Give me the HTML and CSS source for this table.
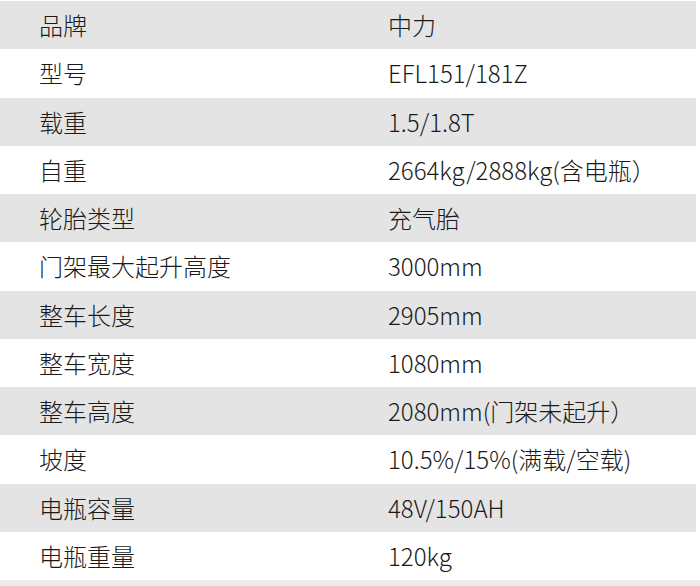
FILE: index.html
```html
<!DOCTYPE html>
<html lang="zh">
<head>
<meta charset="utf-8">
<link rel="stylesheet" href="styles.css">
</head>
<body>
<div class="spec">
  <div class="row alt"><span class="k">品牌</span><span class="v">中力</span></div>
  <div class="row"><span class="k">型号</span><span class="v">EFL151/181Z</span></div>
  <div class="row alt"><span class="k">载重</span><span class="v">1.5/1.8T</span></div>
  <div class="row"><span class="k">自重</span><span class="v">2664kg/2888kg(含电瓶）</span></div>
  <div class="row alt"><span class="k">轮胎类型</span><span class="v">充气胎</span></div>
  <div class="row"><span class="k">门架最大起升高度</span><span class="v">3000mm</span></div>
  <div class="row alt"><span class="k">整车长度</span><span class="v">2905mm</span></div>
  <div class="row"><span class="k">整车宽度</span><span class="v">1080mm</span></div>
  <div class="row alt"><span class="k">整车高度</span><span class="v">2080mm(门架未起升）</span></div>
  <div class="row"><span class="k">坡度</span><span class="v">10.5%/15%(满载/空载)</span></div>
  <div class="row alt"><span class="k">电瓶容量</span><span class="v">48V/150AH</span></div>
  <div class="row"><span class="k">电瓶重量</span><span class="v">120kg</span></div>
</div>
<div class="foot"></div>
</body>
</html>
```
FILE: styles.css
```css
html, body {
  margin: 0;
  padding: 0;
  background: #ffffff;
}
body {
  font-family: "Noto Sans CJK SC", "Noto Sans", sans-serif;
  font-weight: 300;
  color: #1a1a1a;
  width: 700px;
  height: 586px;
  overflow: hidden;
}
.spec {
  width: 696px;
  padding-top: 1px;
}
.row {
  display: grid;
  grid-template-columns: 349px 1fr;
  align-items: center;
  height: 48.25px;
  padding-left: 39px;
  font-size: 24px;
  line-height: 1;
  box-sizing: border-box;
}
.row.alt {
  background: #e4e4e4;
}
.k, .v {
  white-space: nowrap;
}
.foot {
  height: 6px;
  background: #ececec;
}
```
